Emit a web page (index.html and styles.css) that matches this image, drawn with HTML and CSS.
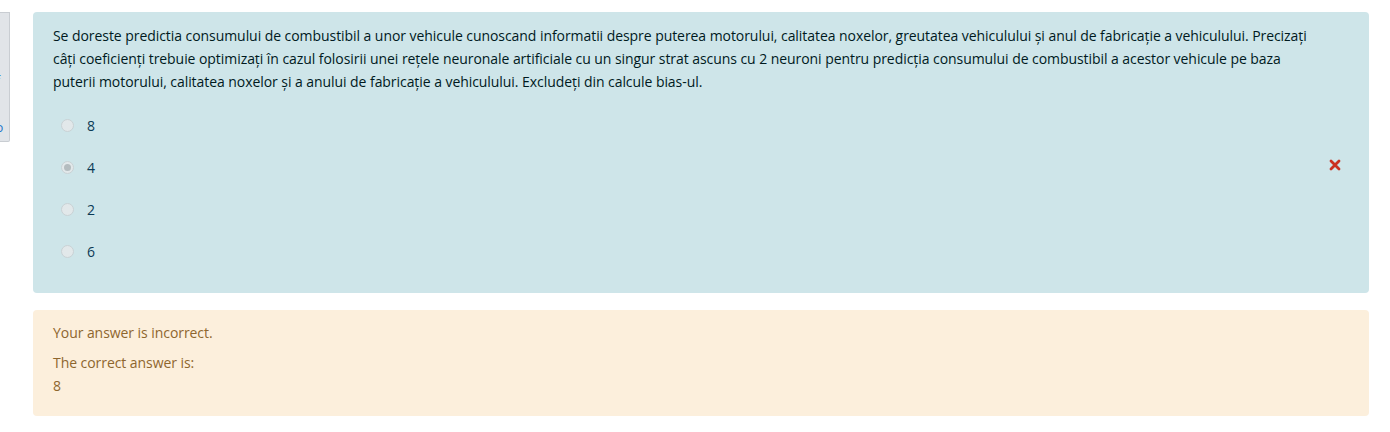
FILE: index.html
```html
<!DOCTYPE html>
<html lang="ro">
<head>
<meta charset="utf-8">
<link rel="stylesheet" href="styles.css">
</head>
<body>
<div class="page">
  <aside class="side">
    <div class="side-link l1">f</div>
    <div class="side-link l2">o</div>
  </aside>
  <main class="content">
    <section class="formulation">
      <div class="qtext">Se doreste predictia consumului de combustibil a unor vehicule cunoscand informatii despre puterea motorului, calitatea noxelor, greutatea vehiculului și anul de fabricație a vehiculului. Precizați câți coeficienți trebuie optimizați în cazul folosirii unei rețele neuronale artificiale cu un singur strat ascuns cu 2 neuroni pentru predicția consumului de combustibil a acestor vehicule pe baza puterii motorului, calitatea noxelor și a anului de fabricație a vehiculului. Excludeți din calcule bias-ul.</div>
      <div class="answers">
        <div class="opt"><span class="radio"></span><span class="lbl">8</span></div>
        <div class="opt"><span class="radio checked"></span><span class="lbl">4</span>
          <svg class="wrong" viewBox="0 0 12 12" width="12" height="12"><path d="M2 2 L10 10 M10 2 L2 10" stroke="#ca3120" stroke-width="2.8" stroke-linecap="round"/></svg>
        </div>
        <div class="opt"><span class="radio"></span><span class="lbl">2</span></div>
        <div class="opt"><span class="radio"></span><span class="lbl">6</span></div>
      </div>
    </section>
    <section class="outcome">
      <p class="fb">Your answer is incorrect.</p>
      <p class="fb">The correct answer is:<br>8</p>
    </section>
  </main>
</div>
</body>
</html>
```
FILE: styles.css
```css
html, body { margin: 0; padding: 0; background: #fff; }
body {
  font-family: "Open Sans", "Noto Sans", sans-serif;
  font-size: 14px;
  letter-spacing: -0.06px;
  line-height: 23px;
  color: #001a1e;
}
.page { display: flex; align-items: flex-start; padding-top: 12px; }
.side {
  width: 10px;
  height: 130px;
  box-sizing: border-box;
  background: #e1e4e8;
  border: 1px solid #c9cdd2;
  border-left: none;
  border-radius: 0 0 2px 0;
  overflow: hidden;
  flex: none;
}
.side-link {
  color: #1a73c8;
  font-size: 12px;
  line-height: 14px;
  margin-left: -4px;
}
.l1 { margin-top: 61px; }
.l2 { margin-top: 33px; }
.content { flex: 1; margin-left: 23px; margin-right: 21px; }
.formulation {
  background: #cee5e9;
  border-radius: 4px;
  padding: 12px 28px 21px 20px;
}
.qtext { margin-bottom: 11px; padding-right: 22px; }
.answers { display: flex; flex-direction: column; }
.opt { display: flex; align-items: center; height: 42px; padding-left: 8px; }
.radio {
  width: 13px; height: 13px; box-sizing: border-box;
  border-radius: 50%;
  background: #e2e8ea;
  border: 1px solid #c9d2d5;
  margin-right: 13px;
  display: flex; align-items: center; justify-content: center;
}
.radio.checked::after {
  content: "";
  width: 7px; height: 7px; border-radius: 50%;
  background: #b4bcbf;
}
.lbl { color: #0b3a55; }
.wrong { margin-left: auto; margin-bottom: 4px; }
.outcome {
  margin-top: 17px;
  background: #fcefdc;
  color: #8e662e;
  border-radius: 4px;
  padding: 11px 20px 19px;
}
.fb { margin: 0; }
.fb + .fb { margin-top: 7px; }
```
